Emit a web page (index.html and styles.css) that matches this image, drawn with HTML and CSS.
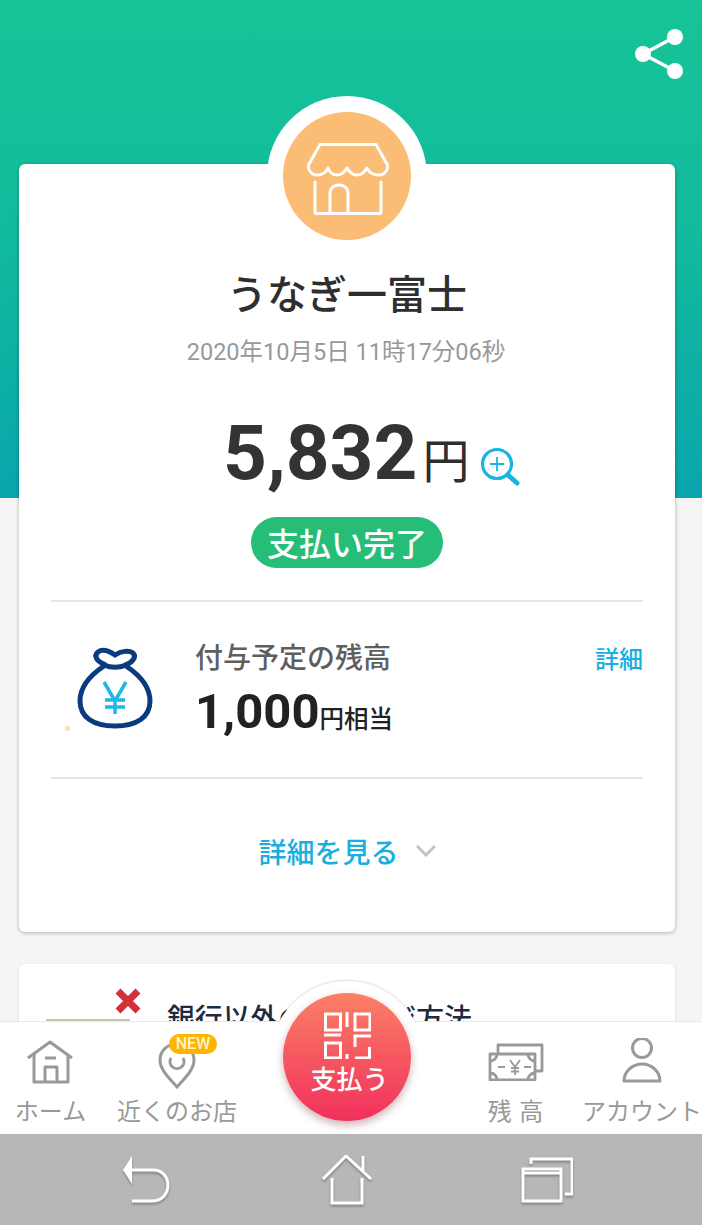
FILE: index.html
```html
<!DOCTYPE html>
<html lang="ja">
<head>
<meta charset="utf-8">
<title>支払い完了</title>
<link rel="stylesheet" href="styles.css">
</head>
<body>
<div class="app">
  <main class="screen">
    <div class="topbar">
      <svg class="share" viewBox="0 0 50 50" width="50" height="50"><path d="M41 8 9 25l32 17" fill="none" stroke="#fff" stroke-width="3.500"/><circle cx="41" cy="8" r="8" fill="#fff"/><circle cx="9" cy="25" r="8" fill="#fff"/><circle cx="41" cy="42" r="8" fill="#fff"/></svg>
    </div>
    <section class="card receipt">
      <div class="ring"><div class="avatar">
        <svg viewBox="0 0 84 72" width="84" height="72" fill="none" stroke="#fff" stroke-width="3" stroke-linejoin="round" stroke-linecap="round"><path d="M14 1.500H70L81 21C83 26 79 32 73 32 68 32 63 30 61 25 58 30 54 32 51 32 47 32 44 30 41 25 38 30 35 32 31 32 28 32 24 30 22 25 20 30 16 32 11 32 5 32 1 26 3 21Z"/><path d="M9 39V69c0 1 .5 1.500 1.500 1.500h63c1 0 1.500-.5 1.500-1.500V39"/><path d="M24 70V50c0-5 4-8 9-8s9 3 9 8v20"/></svg>
      </div></div>
      <h1 class="shop">うなぎ一富士</h1>
      <p class="date">2020年10月5日 11時17分06秒</p>
      <div class="amount">
        <span class="num">5,832</span><span class="yen">円</span>
        <svg class="zoom" viewBox="0 0 40 40" width="40" height="40" fill="none" stroke="#18b4e6"><circle cx="17" cy="17" r="14.500" stroke-width="3.200"/><path d="M17 10v14M10 17h14" stroke-width="1.800"/><path d="M28 28l9 8" stroke-width="5" stroke-linecap="round"/></svg>
      </div>
      <div class="status-wrap"><span class="status">支払い完了</span></div>
      <div class="balance">
        <svg class="bag" viewBox="0 0 90 90" width="90" height="90" fill="none"><path d="M37 21C28 18 24 12 29 8 33 5 40 7 46 11 52 7 60 6 64 9 68 13 63 19 56 21M35 21c7 3 15 3 22 0M35 22C20 32 11 44 11 57 11 73 24 82 46 82 68 82 81 73 81 57 81 44 72 32 57 22" stroke="#0b3a7e" stroke-width="5"/><path d="M35 38l11 19 11-19M46 57v13M36 56h20M36 63h20" stroke="#1fb7e8" stroke-width="3.500"/></svg>
        <i class="speck"></i>
        <div class="balance-text">
          <div class="balance-label">付与予定の残高</div>
          <div class="balance-value"><b>1,000</b><span>円相当</span></div>
        </div>
        <a class="detail-link">詳細</a>
      </div>
      <div class="more"><span>詳細を見る</span>
        <svg viewBox="0 0 20 12" width="20" height="12" fill="none" stroke="#c4c4c4" stroke-width="3"><path d="M1 1l9 9 9-9"/></svg>
      </div>
    </section>
    <section class="card second">
      <svg class="cross" viewBox="0 0 28 28" width="28" height="28"><path d="M4 4l20 20M24 4 4 24" stroke="#d23139" stroke-width="7"/></svg>
      <div class="thumb"></div>
      <div class="second-title">銀行以外のチャージ方法</div>
    </section>
  </main>
  <nav class="tabs">
    <a class="tab tab-home">
      <svg viewBox="0 0 50 46" width="50" height="46" fill="none" stroke="#999" stroke-width="3" stroke-linejoin="round"><path d="M2 18 24 2l22 16"/><path d="M8 14V42h34V14"/><path d="M19 42V27h12v15M19 18h11"/></svg>
      <span>ホーム</span>
    </a>
    <a class="tab tab-near">
      <em class="new">NEW</em>
      <svg viewBox="0 0 38 50" width="38" height="50" fill="none" stroke="#999" stroke-width="3"><path d="M19 44C9 33 2 26 2 17 2 8 9 1 19 1s17 7 17 16c0 9-7 16-17 27z"/><path d="M13 15a7 7 0 1 0 12 0"/></svg>
      <span>近くのお店</span>
    </a>
    <div class="tab-gap"></div>
    <a class="tab tab-bal">
      <svg viewBox="0 0 56 38" width="56" height="38" fill="none" stroke="#999" stroke-width="2.800" stroke-linejoin="round"><path d="M10 10V2h44v26h-7"/><path d="M2 11h45v26H2z"/><path d="M2 18c4 0 7-3 7-7M40 11c0 4 3 7 7 7M2 30c4 0 7 3 7 7M47 30c-4 0-7 3-7 7"/><path d="M22 17l5 7 5-7M27 24v8M23 25h8M23 28.500h8M10 24h7M36 24h7" stroke-width="1.800"/></svg>
      <span>残 高</span>
    </a>
    <a class="tab tab-acct">
      <svg viewBox="0 0 42 46" width="42" height="46" fill="none" stroke="#999" stroke-width="3" stroke-linejoin="round"><circle cx="21" cy="10" r="9.500"/><path d="M3 43c0-9 8-17 18-17s18 8 18 17z"/></svg>
      <span>アカウント</span>
    </a>
    <div class="pay-halo"></div>
    <a class="pay">
      <svg viewBox="0 0 47 47" width="47" height="47" fill="none" stroke="#fff" stroke-width="3"><path d="M1.500 2h15v16h-15zM23 0v15M31 2h15v16H31zM0 23h17M1.500 31h15v15h-15zM23 42v5M47 24H31v11M45.500 35v11H31"/></svg>
      <span>支払う</span>
    </a>
  </nav>
  <footer class="sysbar">
    <svg viewBox="0 0 50 50" width="50" height="50" fill="none" stroke="#fff" stroke-width="3"><path d="M1 15 10 1v28z" fill="#fff" stroke="none"/><path d="M9 15h22c20 0 20 31-1 31H10"/></svg>
    <svg viewBox="0 0 52 50" width="52" height="50" fill="none" stroke="#fff" stroke-width="3"><path d="M2 24 25 1l25 23M42 1v15M11 23v25h30V23"/></svg>
    <svg viewBox="0 0 52 46" width="52" height="46" fill="none" stroke="#fff" stroke-width="3"><path d="M2 12h38v32H2zM2 16h38M10 7V2h41v35h-7"/></svg>
  </footer>
</div>
</body>
</html>
```

FILE: styles.css
```css
* { box-sizing: border-box; }
html, body { margin: 0; padding: 0; }
body { font-family: Roboto, "Noto Sans CJK JP", sans-serif; background: #f5f5f5; }
h1, p { margin: 0; }
.app { width: 702px; height: 1225px; display: flex; flex-direction: column; overflow: hidden; position: relative; }
.screen {
  height: 1021px; overflow: hidden; padding: 0 27px 0 19px; flex: none;
  background: linear-gradient(#16c497 0, #12bb9d 230px, #0aa5ad 498px) no-repeat;
  background-size: 100% 498px;
  background-color: #f5f5f5;
}
.topbar { height: 164px; display: flex; justify-content: flex-end; margin-right: -9px; padding-top: 29px; }
.share { display: block; }
.card { background: #fff; border-radius: 6px; box-shadow: 0 1px 4px rgba(0,0,0,.28); position: relative; }
.receipt { height: 768px; }
.ring { position: absolute; left: 248px; top: -68px; width: 160px; height: 160px; border-radius: 50%; background: #fff; display: flex; align-items: center; justify-content: center; }
.avatar { width: 128px; height: 128px; border-radius: 50%; background: #fbbc76; display: flex; align-items: center; justify-content: center; padding: 6px 0 0 2px; }
.shop { padding-top: 100px; font-size: 40px; font-weight: 500; line-height: 56px; text-align: center; color: #2e2e2e; font-family: "Noto Sans CJK JP", sans-serif; }
.date { margin-top: 16px; text-align: center; font-size: 23.500px; line-height: 32px; color: #999; padding-right: 2px; }
.amount { margin-top: 27px; height: 122px; display: flex; align-items: flex-start; padding-left: 204px; position: relative; }
.num { font-size: 76.500px; font-weight: 700; color: #333; line-height: 106px; margin-top: 5px; }
.yen { font-size: 47px; color: #2e2e2e; line-height: 60px; margin-top: 33px; margin-left: 5px; font-family: "Noto Sans CJK JP", sans-serif; }
.zoom { margin-top: 52px; margin-left: 11px; }
.status-wrap { display: flex; justify-content: center; }
.status { width: 192px; height: 51px; border-radius: 26px; background: #26bd78; color: #fff; font-size: 32px; font-weight: 500; line-height: 51px; text-align: center; font-family: "Noto Sans CJK JP", sans-serif; }
.balance { margin: 32px 32px 0; height: 179px; border-top: 2px solid #e6e6e6; border-bottom: 2px solid #e6e6e6; display: flex; position: relative; padding-top: 34px; }
.bag { margin: 8px 0 0 18px; flex: none; }
.speck { position: absolute; left: 14px; top: 124px; width: 5px; height: 5px; border-radius: 50%; background: #f8e4a0; }
.balance-text { margin-left: 36px; flex: 1; }
.balance-label { font-size: 28px; font-weight: 500; line-height: 40px; color: #5e5e5e; font-family: "Noto Sans CJK JP", sans-serif; }
.balance-value { margin-top: 3px; display: flex; align-items: baseline; color: #222; }
.balance-value b { font-size: 49px; line-height: 66px; font-weight: 700; }
.balance-value span { font-size: 24.500px; font-weight: 500; font-family: "Noto Sans CJK JP", sans-serif; }
.detail-link { font-size: 24px; font-weight: 500; line-height: 34px; color: #18aee0; position: absolute; right: 0; top: 39px; font-family: "Noto Sans CJK JP", sans-serif; }
.more { display: flex; align-items: center; justify-content: center; gap: 17px; margin-top: 51px; height: 42px; color: #18aee0; font-size: 28px; font-weight: 500; font-family: "Noto Sans CJK JP", sans-serif; }
.second { margin-top: 32px; height: 200px; box-shadow: 0 1px 3px rgba(0,0,0,.14); }
.cross { position: absolute; left: 95px; top: 23px; }
.thumb { position: absolute; left: 27px; top: 55px; width: 84px; height: 2px; background: #b9cfa8; }
.second-title { position: absolute; left: 148px; top: 32px; font-size: 27.800px; font-weight: 500; line-height: 40px; color: #1d2b40; white-space: nowrap; font-family: "Noto Sans CJK JP", sans-serif; }
.tabs { height: 113px; flex: none; background: #fff; border-top: 1px solid #e8e8e8; display: flex; position: relative; color: #999; }
.tab { position: relative; display: flex; flex-direction: column; align-items: center; flex: none; }
.tab span { position: absolute; top: 72px; white-space: nowrap; font-size: 24px; line-height: 32px; color: #999; font-family: "Noto Sans CJK JP", sans-serif; }
.tab-home { width: 101px; padding-top: 18px; }
.tab-near { width: 152px; padding-top: 21px; }
.tab-gap { width: 199px; flex: none; }
.tab-bal { width: 128px; padding-top: 21px; }
.tab-bal span { letter-spacing: 1px; }
.tab-acct { width: 124px; padding-top: 16px; }
.new { position: absolute; left: 68px; top: 12px; width: 48px; height: 20px; border-radius: 10px; background: #ffb400; color: #fff3c8; font-size: 16px; font-style: normal; font-weight: 500; line-height: 20px; text-align: center; z-index: 1; }
.pay-halo { position: absolute; left: 270px; top: -41px; width: 154px; height: 154px; border-radius: 50%; background: #fff; box-shadow: 0 -1px 2px rgba(0,0,0,.14); clip-path: inset(-4px -4px 113px -4px); }
.pay { position: absolute; left: 283px; top: -29px; width: 128px; height: 128px; border-radius: 50%; background: linear-gradient(#fb8066, #f1305c); box-shadow: 0 4px 8px rgba(90,0,20,.3); display: flex; flex-direction: column; align-items: center; padding-top: 19px; }
.pay span { color: #fff; font-size: 26px; line-height: 34px; margin: 2px 0 0 5px; font-weight: 500; font-family: "Noto Sans CJK JP", sans-serif; }
.sysbar { flex: none; height: 91px; background: #b7b7b7; display: flex; align-items: center; padding: 0 129px 0 122px; justify-content: space-between; }
.sysbar svg { filter: drop-shadow(0 2px 1px rgba(0,0,0,.28)); }
```
